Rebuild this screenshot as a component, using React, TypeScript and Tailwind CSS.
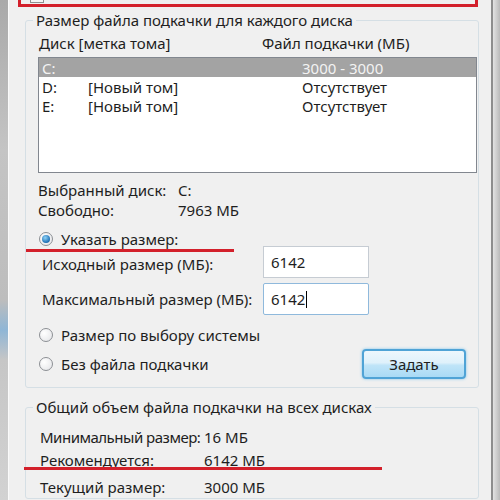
import React from "react";

const font = { fontFamily: '"Noto Sans", "Open Sans", sans-serif' };

function Radio({ checked }: { checked?: boolean }) {
  return (
    <span className="flex h-[14px] w-[14px] shrink-0 items-center justify-center rounded-full border border-[#8c8f94] bg-[radial-gradient(circle_at_35%_35%,#ffffff,#e2e3e6)]">
      {checked && (
        <span className="h-[8px] w-[8px] rounded-full bg-[radial-gradient(circle_at_40%_35%,#8fd3f7,#1d6fb4_70%,#0f4f8a)]" />
      )}
    </span>
  );
}

export default function App() {
  return (
    <div
      className="relative flex h-[500px] w-[500px] overflow-hidden whitespace-nowrap bg-[#c9c9c9] text-[15px] leading-[20px] text-[#1e1e1e]"
      style={font}
    >
      {/* left blurred background */}
      <div className="h-full w-[8px] shrink-0 bg-[linear-gradient(to_bottom,#a9a9a9_0%,#c4c4c4_30%,#bdbdbd_60%,#8fb6d6_66%,#c6c6c6_72%,#d2d2d2_100%)]" />

      {/* dialog */}
      <div className="flex h-full w-[485px] shrink-0 flex-col border-l border-r-2 border-l-[#fafafa] border-r-[#8d8d8d] bg-[#f0f0f0]">
        {/* red box (top, cut) */}
        <div className="-mt-[13px] ml-[9px] flex h-[20px] w-[460px] shrink-0 items-end border-[3px] border-[#d3202b]">
          <span className="mb-[1px] ml-[9px] h-[13px] w-[14px] border border-[#8f8f8f] bg-[#f4f4f4]" />
        </div>

        {/* group 1 */}
        <fieldset className="ml-[16px] mt-[3px] w-[454px] shrink-0 rounded-[3px] border border-[#d5dfe5] pb-[8px] pl-[7px] pr-[1px]">
          <legend className="px-[3px] leading-[20px]">
            Размер файла подкачки для каждого диска
          </legend>
          <div className="ml-[5px] flex flex-col">
            <div className="mt-[4px] flex h-[18px] items-center">
              <span className="ml-[1px] w-[223px]">Диск [метка тома]</span>
              <span>Файл подкачки (МБ)</span>
            </div>
            <div className="mt-[5px] h-[116px] w-[439px] border border-[#82878f] bg-white">
              <div className="flex h-[19px] items-center bg-[#a3a3a3] text-[#f3f3f3]">
                <span className="ml-[3px] w-[46px]">C:</span>
                <span className="w-[214px]"></span>
                <span>3000 - 3000</span>
              </div>
              <div className="flex h-[19px] items-center">
                <span className="ml-[3px] w-[46px]">D:</span>
                <span className="w-[214px]">[Новый том]</span>
                <span>Отсутствует</span>
              </div>
              <div className="flex h-[19px] items-center">
                <span className="ml-[3px] w-[46px]">E:</span>
                <span className="w-[214px]">[Новый том]</span>
                <span>Отсутствует</span>
              </div>
            </div>

            <div className="mt-[7px] flex h-[20px] items-center">
              <span className="w-[140px]">Выбранный диск:</span>
              <span>C:</span>
            </div>
            <div className="flex h-[20px] items-center">
              <span className="w-[140px]">Свободно:</span>
              <span>7963 МБ</span>
            </div>

            <div className="mt-[9px] flex h-[20px] items-center gap-[8px] pl-[1px]">
              <Radio checked />
              <span>Указать размер:</span>
            </div>

            <div className="-mt-[3px] flex h-[32px] items-center">
              <span className="w-[225px] pl-[4px] pt-[4px]">Исходный размер (МБ):</span>
              <div className="flex h-[32px] w-[106px] items-center border border-[#c6ccd3] bg-white pl-[7px]">
                6142
              </div>
            </div>
            <div className="mt-[5px] flex h-[32px] items-center">
              <span className="w-[225px] pl-[4px]">Максимальный размер (МБ):</span>
              <div className="flex h-[32px] w-[106px] items-center rounded-[2px] border border-[#8fb9dc] bg-white pl-[7px]">
                6142
                <span className="ml-[1px] h-[17px] w-[1px] bg-black" />
              </div>
            </div>

            <div className="mt-[10px] flex h-[20px] items-center gap-[8px] pl-[1px]">
              <Radio />
              <span>Размер по выбору системы</span>
            </div>
            <div className="mt-[4px] flex h-[30px] items-center pl-[1px]">
              <Radio />
              <span className="ml-[8px]">Без файла подкачки</span>
              <button className="ml-auto mr-[11px] flex h-[30px] w-[104px] items-center justify-center rounded-[4px] border-2 border-[#4fa3d6] bg-[linear-gradient(to_bottom,#edf7fd_0%,#dff1fb_45%,#bfe4f8_55%,#a9daf5_100%)] text-[15px] shadow-[0_0_3px_#7cc4ec]">
                Задать
              </button>
            </div>
          </div>
        </fieldset>

        {/* group 2 */}
        <fieldset className="ml-[16px] mt-[9px] w-[454px] shrink-0 rounded-[3px] border border-[#d5dfe5] pl-[7px] pr-[1px]">
          <legend className="px-[3px] leading-[20px]">
            Общий объем файла подкачки на всех дисках
          </legend>
          <div className="ml-[7px] flex flex-col">
            <div className="mt-[9px] flex h-[22px] items-center">
              <span className="w-[164px] shrink-0 tracking-[-0.5px]">Минимальный размер:</span>
              <span>16 МБ</span>
            </div>
            <div className="mt-[1px] flex h-[22px] items-center">
              <span className="w-[164px] shrink-0">Рекомендуется:</span>
              <span>6142 МБ</span>
            </div>
            <div className="mt-[5px] flex h-[22px] items-center">
              <span className="w-[164px] shrink-0">Текущий размер:</span>
              <span>3000 МБ</span>
            </div>
          </div>
        </fieldset>
      </div>

      {/* right blurred background */}
      <div className="h-full flex-1 bg-[linear-gradient(to_right,#e2e2e2,#b9b9b9)]" />

      {/* red annotation underlines */}
      <div className="absolute left-[26px] top-[249px] h-[3px] w-[208px] bg-[#d3202b]" />
      <div className="absolute left-[24px] top-[467px] h-[3px] w-[358px] bg-[#d3202b]" />
    </div>
  );
}
